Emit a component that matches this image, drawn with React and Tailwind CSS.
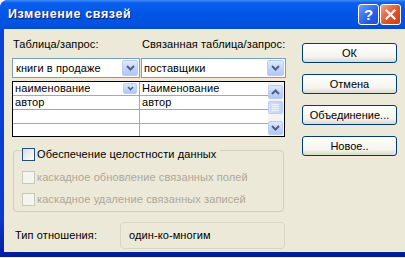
import React from 'react';

const Chevron = ({ up = false, size = 'md' }) => {
    const w = size === 'sm' ? 7 : 9;
    const h = size === 'sm' ? 5 : 6;
    const d = up
        ? `M1 ${h - 1}L${w / 2} 1.5L${w - 1} ${h - 1}`
        : `M1 1L${w / 2} ${h - 1.5}L${w - 1} 1`;
    return (
        <svg width={w} height={h} viewBox={`0 0 ${w} ${h}`}>
            <path d={d} fill="none" stroke="#4d6185" strokeWidth={size === 'sm' ? 1.6 : 2} />
        </svg>
    );
};

const DropBtn = ({ className, up, size }) => (
    <div className={`flex shrink-0 items-center justify-center rounded-[2px] border border-[#bccdf5] bg-[linear-gradient(to_bottom,#dfe8fe,#c0d2fb_60%,#b2c6f6)] ${className}`}>
        <Chevron up={up} size={size} />
    </div>
);

const XpButton = ({ children }) => (
    <button className="flex h-[20px] w-[95px] items-center justify-center rounded-[3px] border border-[#003c74] bg-[linear-gradient(to_bottom,#ffffff,#f5f4ee_70%,#dcd9cc)] text-[11px] leading-none text-black">
        {children}
    </button>
);

const CheckBox = ({ disabled }) => (
    <div className={`h-[13px] w-[13px] shrink-0 border ${disabled ? 'border-[#cac8bb] bg-[#f5f4ef]' : 'border-[#1c5180] bg-[linear-gradient(135deg,#dcdcd6,#ffffff)]'}`} />
);

const rows = [
    ['наименование', 'Наименование'],
    ['автор', 'автор'],
    ['', ''],
    ['', ''],
];

export default function App() {
    return (
        <div className="h-[258px] w-[405px] overflow-hidden bg-[#f2f2f0] font-['Liberation_Sans',Arial,sans-serif]">
            <div className="flex h-[257px] w-[412px] flex-col overflow-hidden rounded-tl-[8px] bg-[linear-gradient(to_bottom,#0a44d8,#0a3bd0_85%,#001c9a)]">
                {/* title bar */}
                <div className="flex h-[29px] shrink-0 items-center bg-[linear-gradient(to_bottom,#3d8cf7_0%,#0a5ff0_10%,#0055e5_50%,#0052df_85%,#0a48cc_100%)] pl-[8px] pr-[11px]">
                    <span className="flex-1 text-[12.5px] font-bold tracking-[0.6px] text-white [text-shadow:1px_1px_0_#0a1c7a]">
                        Изменение связей
                    </span>
                    <div className="flex gap-[1px]">
                        <div className="flex h-[21px] w-[21px] items-center justify-center rounded-[3px] border border-white bg-[linear-gradient(135deg,#6f9ff7,#2860e8_60%,#1f4fd0)] text-[15px] font-bold leading-none text-white">
                            ?
                        </div>
                        <div className="flex h-[21px] w-[21px] items-center justify-center rounded-[3px] border border-white bg-[linear-gradient(135deg,#f0a285,#e0542a_55%,#c83c12)]">
                            <svg width="11" height="11" viewBox="0 0 11 11">
                                <path d="M1.5 1.5l8 8M9.5 1.5l-8 8" stroke="#fff" strokeWidth="2.2" strokeLinecap="square" />
                            </svg>
                        </div>
                    </div>
                </div>

                {/* body */}
                <div className="ml-[4px] flex h-[223px] w-[404px] bg-[#ece9d8] pl-[8px] pt-[9px] text-[11px] text-black">
                    <div className="flex w-[274px] flex-col whitespace-nowrap tracking-[0.1px]">
                        <div className="flex h-[12px] items-center leading-none">
                            <span className="ml-[1px] w-[128px]">Таблица/запрос:</span>
                            <span className="ml-[1px]">Связанная таблица/запрос:</span>
                        </div>

                        <div className="mt-[8px] flex gap-[1px]">
                            <div className="flex h-[20px] w-[128px] items-center border border-[#7f9db9] bg-white pl-[3px] pr-[1px]">
                                <span className="flex-1 leading-none">книги в продаже</span>
                                <DropBtn className="h-[16px] w-[16px]" />
                            </div>
                            <div className="flex h-[20px] w-[145px] items-center border border-[#7f9db9] bg-white pl-[2px] pr-[1px]">
                                <span className="flex-1 leading-none">поставщики</span>
                                <DropBtn className="h-[16px] w-[17px]" />
                            </div>
                        </div>

                        <div className="mt-[3px] flex h-[56px] w-[273px] border border-black bg-white">
                            <div className="flex flex-1 flex-col">
                                {rows.map((r, i) => (
                                    <div key={i} className={`flex ${i < 3 ? 'h-[14px] border-b border-[#a7a6aa]' : 'flex-1'}`}>
                                        <div className="flex w-[127px] items-center border-r border-[#a7a6aa] pl-[2px] pr-[2px] leading-none">
                                            <span className="flex-1">{r[0]}</span>
                                            {i === 0 && <DropBtn className="h-[11px] w-[14px]" size="sm" />}
                                        </div>
                                        <div className="flex flex-1 items-center pl-[2px] leading-none">{r[1]}</div>
                                    </div>
                                ))}
                            </div>
                            <div className="flex w-[16px] flex-col bg-[#f4f3ee] pb-[1px] pt-[3px]">
                                <DropBtn className="h-[14px] w-[15px]" up />
                                <div className="mt-[2px] flex h-[13px] w-[15px] flex-col items-center justify-center gap-[1px] rounded-[2px] border border-[#bccdf5] bg-[linear-gradient(to_right,#d3defc,#c3d3fb)]">
                                    <div className="h-px w-[7px] bg-[#eef3fe]" />
                                    <div className="h-px w-[7px] bg-[#eef3fe]" />
                                    <div className="h-px w-[7px] bg-[#eef3fe]" />
                                    <div className="h-px w-[7px] bg-[#eef3fe]" />
                                </div>
                                <div className="flex-1" />
                                <DropBtn className="h-[14px] w-[15px]" />
                            </div>
                        </div>

                        <div className="ml-[1px] mt-[13px] flex h-[62px] w-[271px] flex-col rounded-[4px] border border-[#d0d0bf] pb-[4px] pl-[8px]">
                            <div className="-mt-[4px] flex h-[14px] w-fit items-center gap-[2px] bg-[#ece9d8] pr-[4px]">
                                <CheckBox />
                                <span className="leading-none">Обеспечение целостности данных</span>
                            </div>
                            <div className="mt-[9px] flex h-[14px] items-center gap-[2px] text-[#aca899]">
                                <CheckBox disabled />
                                <span className="leading-none">каскадное обновление связанных полей</span>
                            </div>
                            <div className="mt-[8px] flex h-[14px] items-center gap-[2px] text-[#aca899]">
                                <CheckBox disabled />
                                <span className="leading-none">каскадное удаление связанных записей</span>
                            </div>
                        </div>

                        <div className="mt-[10px] flex h-[27px] items-center">
                            <span className="ml-[3px] w-[105px] leading-none">Тип отношения:</span>
                            <div className="flex h-[27px] w-[165px] items-center rounded-[4px] border border-[#d8d6c8] pl-[8px] leading-none">
                                один-ко-многим
                            </div>
                        </div>
                    </div>

                    <div className="ml-[16px] mt-[5px] flex flex-col gap-[11px]">
                        <XpButton>ОК</XpButton>
                        <XpButton>Отмена</XpButton>
                        <XpButton>Объединение...</XpButton>
                        <XpButton>Новое..</XpButton>
                    </div>
                </div>
            </div>
        </div>
    );
}
